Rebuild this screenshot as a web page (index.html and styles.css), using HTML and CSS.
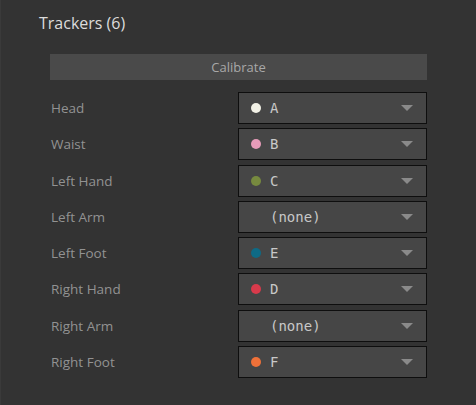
FILE: index.html
```html
<!DOCTYPE html>
<html>
<head>
<meta charset="utf-8">
<link rel="stylesheet" href="styles.css">
</head>
<body>
<div class="panel">
  <div class="title">Trackers (6)</div>
  <div class="calibrate">Calibrate</div>
  <div class="rows">
    <div class="label">Head</div>
    <div class="select"><span class="dot c-a"></span><span class="val">A</span><span class="arrow"></span></div>
    <div class="label">Waist</div>
    <div class="select"><span class="dot c-b"></span><span class="val">B</span><span class="arrow"></span></div>
    <div class="label">Left Hand</div>
    <div class="select"><span class="dot c-c"></span><span class="val">C</span><span class="arrow"></span></div>
    <div class="label">Left Arm</div>
    <div class="select"><span class="dot"></span><span class="val">(none)</span><span class="arrow"></span></div>
    <div class="label">Left Foot</div>
    <div class="select"><span class="dot c-e"></span><span class="val">E</span><span class="arrow"></span></div>
    <div class="label">Right Hand</div>
    <div class="select"><span class="dot c-d"></span><span class="val">D</span><span class="arrow"></span></div>
    <div class="label">Right Arm</div>
    <div class="select"><span class="dot"></span><span class="val">(none)</span><span class="arrow"></span></div>
    <div class="label">Right Foot</div>
    <div class="select"><span class="dot c-f"></span><span class="val">F</span><span class="arrow"></span></div>
  </div>
</div>
</body>
</html>
```

FILE: styles.css
```css
html, body {
  margin: 0;
  padding: 0;
  background: #333333;
  height: 100%;
}
body {
  font-family: "Open Sans", "Noto Sans", sans-serif;
  border-left: 1px solid #3a3a3a;
  box-sizing: border-box;
}
.panel {
  padding: 11px 0 0 38px;
}
.title {
  font-size: 16px;
  line-height: 24px;
  color: #dcdcdc;
}
.calibrate {
  margin: 19px 0 0 11px;
  width: 377px;
  height: 26px;
  background: #4a4a4a;
  color: #a8a8a8;
  font-size: 13px;
  line-height: 26px;
  text-align: center;
}
.rows {
  margin: 12px 0 0 12px;
  display: grid;
  grid-template-columns: 187px 189px;
  grid-auto-rows: 32px;
  row-gap: 4.29px;
}
.label {
  display: flex;
  align-items: center;
  color: #929292;
  font-size: 13.5px;
}
.select {
  display: flex;
  align-items: center;
  box-sizing: border-box;
  border: 1px solid #0e0e0e;
  background: #464646;
  padding: 0 13px 0 12px;
}
.dot {
  width: 10px;
  height: 10px;
  border-radius: 50%;
  flex: none;
}
.c-a { background: #f2f1e6; }
.c-b { background: #e79bb9; }
.c-c { background: #778a3f; }
.c-e { background: #0e6a85; }
.c-d { background: #d83a4b; }
.c-f { background: #ef7139; }
.val {
  margin-left: 9px;
  font-family: "DejaVu Sans Mono", monospace;
  font-size: 14px;
  color: #c8c8c8;
  flex: 1;
}
.arrow {
  width: 0;
  height: 0;
  border-left: 6px solid transparent;
  border-right: 6px solid transparent;
  border-top: 6px solid #8a8a8a;
}
```
